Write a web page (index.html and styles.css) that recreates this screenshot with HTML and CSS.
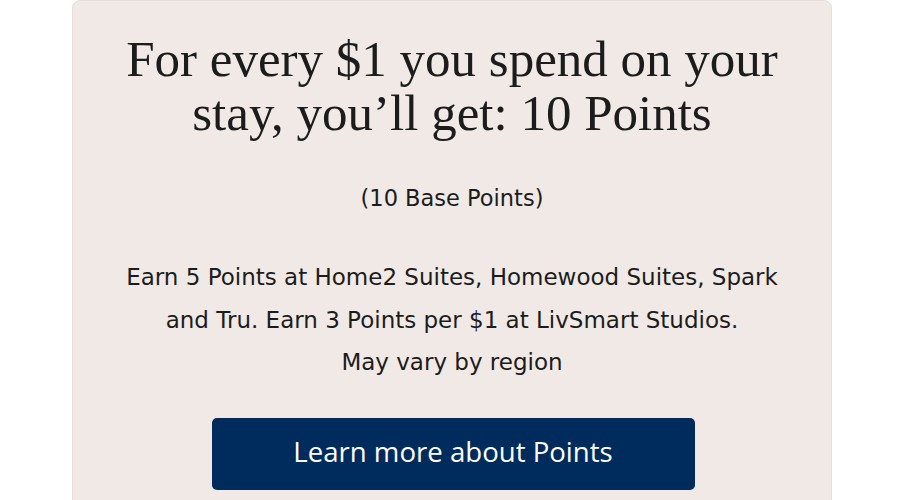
FILE: index.html
```html
<!DOCTYPE html>
<html lang="en">
<head>
<meta charset="utf-8">
<link rel="stylesheet" href="styles.css">
</head>
<body>
<main class="card">
  <h1 class="title">For every $1 you spend on your stay, you’ll get: 10 Points</h1>
  <p class="base">(10 Base Points)</p>
  <p class="note">Earn 5 Points at Home2 Suites, Homewood Suites, Spark and Tru. Earn 3 Points per $1 at LivSmart Studios.<br>May vary by region</p>
  <a class="btn" href="#">Learn more about Points</a>
</main>
</body>
</html>
```
FILE: styles.css
```css
html, body {
  margin: 0;
  padding: 0;
  background: #ffffff;
}
body {
  width: 900px;
  height: 500px;
  overflow: hidden;
}
.card {
  box-sizing: border-box;
  margin-left: 72px;
  width: 760px;
  height: 520px;
  background: #f0e9e6;
  border: 1px solid #e6dfdc;
  border-radius: 8px 8px 0 0;
  display: flex;
  flex-direction: column;
  align-items: center;
  padding: 31px 20px 0;
  text-align: center;
  color: #1c1c1c;
}
.title {
  margin: 0;
  font-family: "Liberation Serif", serif;
  font-weight: 400;
  font-size: 51px;
  line-height: 54px;
  width: 690px;
}
.base {
  margin: 43px 0 0;
  font-family: "DejaVu Sans", sans-serif;
  font-size: 22.5px;
  line-height: 30px;
}
.note {
  margin: 43px 0 0;
  font-family: "DejaVu Sans", sans-serif;
  font-size: 23px;
  line-height: 42.5px;
  width: 670px;
}
.btn {
  box-sizing: border-box;
  margin-top: 34px;
  margin-left: 2px;
  width: 483px;
  height: 72px;
  padding-bottom: 5px;
  flex-shrink: 0;
  border-radius: 5px;
  background: #002c5d;
  color: #ffffff;
  text-decoration: none;
  font-family: "Open Sans", sans-serif;
  font-size: 27.6px;
  display: flex;
  align-items: center;
  justify-content: center;
}
```
